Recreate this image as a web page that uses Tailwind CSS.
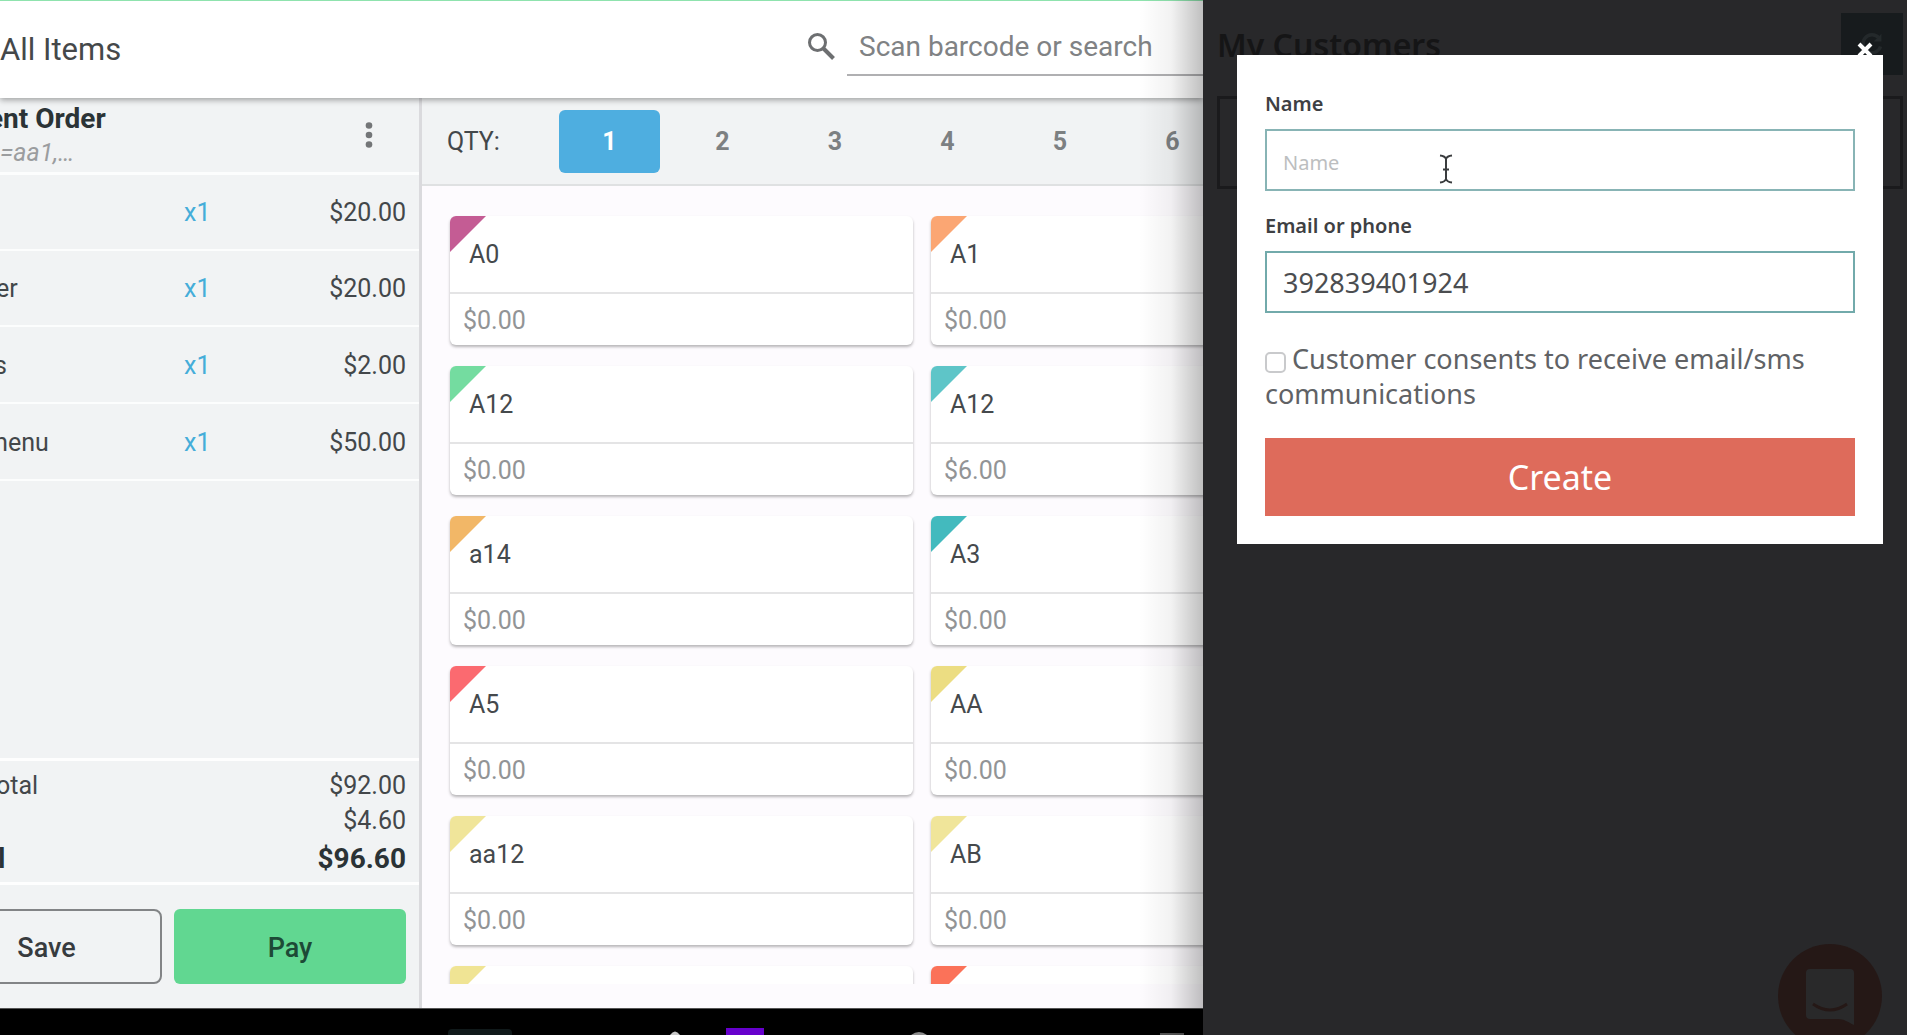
<!DOCTYPE html>
<html lang="en">
<head>
<meta charset="utf-8">
<title>All Items</title>
<script src="https://cdn.jsdelivr.net/npm/@tailwindcss/browser@4"></script>
</head>
<body class="flex h-screen overflow-hidden bg-[#28282a] font-['Roboto',sans-serif] text-[25px] leading-8 text-[#43474a]">

<!-- Register -->
<div class="relative flex min-w-0 flex-1 flex-col overflow-hidden bg-black">
  <header class="relative z-10 flex h-[98px] shrink-0 items-center border-t border-[#8fe3ae] bg-white pb-1 shadow-[0_2px_6px_rgba(0,0,0,0.35)]">
    <h1 class="flex-1 pt-1 text-[31px] text-[#45484a]">All Items</h1>
    <label for="search" class="mr-3 mb-1">
      <svg class="size-7" viewBox="0 0 28 28" fill="none" stroke="#6d6f71" stroke-width="3" aria-label="Search"><circle cx="10.500" cy="10.500" r="8"/><path d="M16.500 16.500L26.500 26.500" stroke-width="4"/></svg>
    </label>
    <input id="search" type="text" placeholder="Scan barcode or search" class="h-14 w-[356px] border-b-2 border-[#b0b0b2] pl-3 text-[28px] outline-none placeholder:text-[#808284]">
  </header>

  <main class="flex min-h-0 flex-1">
    <!-- Current order -->
    <section class="flex w-[422px] shrink-0 flex-col overflow-hidden border-r-3 border-[#dadadd] bg-[#f1f3f4]">
      <div class="flex h-[77px] shrink-0 items-center justify-between border-b-3 border-white/80">
        <div>
          <h2 class="-ml-3 text-[28px] leading-9 font-bold text-[#2b3336]">ent Order</h2>
          <p class="text-[#9b9d9f] italic">=aa1,…</p>
        </div>
        <button class="mr-[42px] p-1" aria-label="Order options">
          <svg class="h-7 w-2" viewBox="0 0 8 28" fill="#737577"><circle cx="4" cy="4.500" r="3.300"/><circle cx="4" cy="14" r="3.300"/><circle cx="4" cy="23.500" r="3.300"/></svg>
        </button>
      </div>
      <table class="h-[306px] w-full table-fixed border-collapse">
        <tbody>
          <tr class="border-b-2 border-white/80"><td class="w-[184px]"></td><td class="w-16 pt-0.5 text-[#45add9]">x1</td><td class="pt-0.5 pr-[13px] text-right">$20.00</td></tr>
          <tr class="border-b-2 border-white/80"><td class="pt-0.5"><span class="-ml-1">er</span></td><td class="pt-0.5 text-[#45add9]">x1</td><td class="pt-0.5 pr-[13px] text-right">$20.00</td></tr>
          <tr class="border-b-2 border-white/80"><td class="pt-0.5"><span class="-ml-1.5">s</span></td><td class="pt-0.5 text-[#45add9]">x1</td><td class="pt-0.5 pr-[13px] text-right">$2.00</td></tr>
          <tr class="border-b-2 border-white/80"><td class="pt-0.5"><span class="-ml-3.5">menu</span></td><td class="pt-0.5 text-[#45add9]">x1</td><td class="pt-0.5 pr-[13px] text-right">$50.00</td></tr>
        </tbody>
      </table>
      <div class="mt-auto border-y-3 border-white/90 pt-2 pr-[13px] pb-1">
        <div class="flex h-[34px] items-center justify-between"><span class="-ml-1">otal</span><span>$92.00</span></div>
        <div class="flex h-9 items-center justify-end"><span>$4.60</span></div>
        <div class="flex h-[39px] items-center justify-between text-[28px] font-bold text-[#2b3336]"><span class="-ml-0.5">l</span><span>$96.60</span></div>
      </div>
      <div class="flex gap-3 pt-6 pr-[13px] pb-6 text-[27px] font-medium">
        <button class="-ml-[69px] h-[75px] w-[231px] shrink-0 rounded-lg border-2 border-[#828486] pt-0.5 text-[#373b3e]">Save</button>
        <button class="h-[75px] flex-1 rounded-md bg-[#61d791] pt-0.5 text-[#1d4a36]">Pay</button>
      </div>
    </section>

    <!-- Items -->
    <section class="flex min-w-0 flex-1 flex-col bg-[#fdfbfe]">
      <div class="flex h-[88px] shrink-0 items-center overflow-hidden border-b-2 border-[#dfe1e2] bg-[#f1f3f4] pl-[25px]">
        <span class="w-28 shrink-0 pt-0.5">QTY:</span>
        <div class="flex gap-3 font-bold text-[#7c8082]">
          <button class="h-[63px] w-[101px] rounded-md bg-[#4eaee0] pt-0.5 text-white">1</button>
          <button class="h-[63px] w-[101px] pt-0.5">2</button>
          <button class="h-[63px] w-[100px] pt-0.5">3</button>
          <button class="h-[63px] w-[101px] pt-0.5">4</button>
          <button class="h-[63px] w-[100px] pt-0.5">5</button>
          <button class="h-[63px] w-[101px] pt-0.5">6</button>
        </div>
      </div>
      <div class="mb-6 min-h-0 flex-1 overflow-hidden pt-[30px] pl-7">
        <div class="grid grid-cols-[463px_463px] gap-x-[18px] gap-y-[21px] text-[#45494c]">
          <article class="relative h-[129px] overflow-hidden rounded-md bg-white shadow-[0_2px_3px_rgba(0,0,0,0.28)]"><span class="absolute top-0 left-0 size-9 bg-[#c45c94] [clip-path:polygon(0_0,100%_0,0_100%)]"></span><h3 class="flex h-[78px] items-center border-b-2 border-[#e4e4e5] pt-0.5 pl-[19px]">A0</h3><p class="flex h-[51px] items-center pt-0.5 pl-[13px] text-[#929496]">$0.00</p></article>
          <article class="relative h-[129px] overflow-hidden rounded-md bg-white shadow-[0_2px_3px_rgba(0,0,0,0.28)]"><span class="absolute top-0 left-0 size-9 bg-[#fba673] [clip-path:polygon(0_0,100%_0,0_100%)]"></span><h3 class="flex h-[78px] items-center border-b-2 border-[#e4e4e5] pt-0.5 pl-[19px]">A1</h3><p class="flex h-[51px] items-center pt-0.5 pl-[13px] text-[#929496]">$0.00</p></article>
          <article class="relative h-[129px] overflow-hidden rounded-md bg-white shadow-[0_2px_3px_rgba(0,0,0,0.28)]"><span class="absolute top-0 left-0 size-9 bg-[#74dca0] [clip-path:polygon(0_0,100%_0,0_100%)]"></span><h3 class="flex h-[78px] items-center border-b-2 border-[#e4e4e5] pt-0.5 pl-[19px]">A12</h3><p class="flex h-[51px] items-center pt-0.5 pl-[13px] text-[#929496]">$0.00</p></article>
          <article class="relative h-[129px] overflow-hidden rounded-md bg-white shadow-[0_2px_3px_rgba(0,0,0,0.28)]"><span class="absolute top-0 left-0 size-9 bg-[#5ec5c8] [clip-path:polygon(0_0,100%_0,0_100%)]"></span><h3 class="flex h-[78px] items-center border-b-2 border-[#e4e4e5] pt-0.5 pl-[19px]">A12</h3><p class="flex h-[51px] items-center pt-0.5 pl-[13px] text-[#929496]">$6.00</p></article>
          <article class="relative h-[129px] overflow-hidden rounded-md bg-white shadow-[0_2px_3px_rgba(0,0,0,0.28)]"><span class="absolute top-0 left-0 size-9 bg-[#f2b767] [clip-path:polygon(0_0,100%_0,0_100%)]"></span><h3 class="flex h-[78px] items-center border-b-2 border-[#e4e4e5] pt-0.5 pl-[19px]">a14</h3><p class="flex h-[51px] items-center pt-0.5 pl-[13px] text-[#929496]">$0.00</p></article>
          <article class="relative h-[129px] overflow-hidden rounded-md bg-white shadow-[0_2px_3px_rgba(0,0,0,0.28)]"><span class="absolute top-0 left-0 size-9 bg-[#43babe] [clip-path:polygon(0_0,100%_0,0_100%)]"></span><h3 class="flex h-[78px] items-center border-b-2 border-[#e4e4e5] pt-0.5 pl-[19px]">A3</h3><p class="flex h-[51px] items-center pt-0.5 pl-[13px] text-[#929496]">$0.00</p></article>
          <article class="relative h-[129px] overflow-hidden rounded-md bg-white shadow-[0_2px_3px_rgba(0,0,0,0.28)]"><span class="absolute top-0 left-0 size-9 bg-[#fb6a70] [clip-path:polygon(0_0,100%_0,0_100%)]"></span><h3 class="flex h-[78px] items-center border-b-2 border-[#e4e4e5] pt-0.5 pl-[19px]">A5</h3><p class="flex h-[51px] items-center pt-0.5 pl-[13px] text-[#929496]">$0.00</p></article>
          <article class="relative h-[129px] overflow-hidden rounded-md bg-white shadow-[0_2px_3px_rgba(0,0,0,0.28)]"><span class="absolute top-0 left-0 size-9 bg-[#ecdd82] [clip-path:polygon(0_0,100%_0,0_100%)]"></span><h3 class="flex h-[78px] items-center border-b-2 border-[#e4e4e5] pt-0.5 pl-[19px]">AA</h3><p class="flex h-[51px] items-center pt-0.5 pl-[13px] text-[#929496]">$0.00</p></article>
          <article class="relative h-[129px] overflow-hidden rounded-md bg-white shadow-[0_2px_3px_rgba(0,0,0,0.28)]"><span class="absolute top-0 left-0 size-9 bg-[#f0e59a] [clip-path:polygon(0_0,100%_0,0_100%)]"></span><h3 class="flex h-[78px] items-center border-b-2 border-[#e4e4e5] pt-0.5 pl-[19px]">aa12</h3><p class="flex h-[51px] items-center pt-0.5 pl-[13px] text-[#929496]">$0.00</p></article>
          <article class="relative h-[129px] overflow-hidden rounded-md bg-white shadow-[0_2px_3px_rgba(0,0,0,0.28)]"><span class="absolute top-0 left-0 size-9 bg-[#f0e59a] [clip-path:polygon(0_0,100%_0,0_100%)]"></span><h3 class="flex h-[78px] items-center border-b-2 border-[#e4e4e5] pt-0.5 pl-[19px]">AB</h3><p class="flex h-[51px] items-center pt-0.5 pl-[13px] text-[#929496]">$0.00</p></article>
          <article class="relative h-[129px] overflow-hidden rounded-md bg-white shadow-[0_2px_3px_rgba(0,0,0,0.28)]"><span class="absolute top-0 left-0 size-9 bg-[#f0e494] [clip-path:polygon(0_0,100%_0,0_100%)]"></span></article>
          <article class="relative h-[129px] overflow-hidden rounded-md bg-white shadow-[0_2px_3px_rgba(0,0,0,0.28)]"><span class="absolute top-0 left-0 size-9 bg-[#fb7259] [clip-path:polygon(0_0,100%_0,0_100%)]"></span></article>
        </div>
      </div>
    </section>
  </main>

  <!-- System navigation -->
  <footer class="flex h-[27px] shrink-0 items-end overflow-hidden border-t border-[#555] bg-black pl-[448px]">
    <span class="h-1.5 w-16 rounded-t bg-[#10191a]"></span>
    <svg class="ml-[158px] h-1 w-2.5" viewBox="0 0 10 4" fill="#c8c8c8"><path d="M0 4Q5-3 10 4z"/></svg>
    <span class="ml-[46px] h-[7px] w-[38px] bg-[#6600cc]"></span>
    <svg class="ml-[147px] h-1 w-4" viewBox="0 0 16 4" fill="#8c8c8c"><path d="M0 4Q8-2 16 4z"/></svg>
    <span class="ml-[233px] h-0.5 w-6 bg-[#555]"></span>
  </footer>
  <div class="pointer-events-none absolute inset-y-0 right-0 z-20 w-16 bg-linear-to-r from-black/0 via-black/5 to-black/25"></div>
</div>

<!-- Customers drawer -->
<aside class="relative w-[704px] shrink-0 overflow-hidden bg-[#28282a] font-['Noto_Sans',sans-serif] text-[#4b4d50]">
  <div class="flex items-start justify-between pt-[13px] pr-1 pl-[14px]">
    <h2 class="pt-2 text-[32px] leading-[48px] font-semibold text-[#151516]">My Customers</h2>
    <button class="flex h-[62px] w-[62px] items-center justify-center bg-[#171b1d]" aria-label="Refresh">
      <svg class="size-6" viewBox="0 0 28 28" fill="none" stroke="#24292b" stroke-width="4"><path d="M24 17A10.500 10.500 0 1 1 22 7"/><path d="M25 2v9h-9z" fill="#24292b" stroke="none"/></svg>
    </button>
  </div>
  <div class="mt-[21px] mr-1 ml-[14px] h-[93px] border-3 border-[#1a1a1c]"></div>

  <button class="absolute right-[25px] bottom-0 flex h-[91px] w-[104px] justify-center overflow-hidden" aria-label="Open chat">
    <svg class="h-[104px] w-[104px] shrink-0" viewBox="0 0 104 104"><circle cx="52" cy="52" r="52" fill="#251816"/><path d="M32 25H72a4 4 0 0 1 4 4V81C70 78 66 75 60 75H32a4 4 0 0 1-4-4V29a4 4 0 0 1 4-4z" fill="#29292a"/><path d="M35 60Q52 72 69 60" fill="none" stroke="#251816" stroke-width="3"/></svg>
  </button>

  <!-- New customer dialog -->
  <form class="absolute top-[55px] right-6 left-[34px] bg-white px-7 pt-[33px] pb-7" role="dialog" aria-label="New customer">
    <button type="button" class="absolute -top-[13px] right-2.5" aria-label="Close">
      <svg class="size-4" viewBox="0 0 16 16" stroke="#fff" stroke-width="4"><path d="M2 2L14 14M14 2L2 14"/></svg>
    </button>
    <label for="name" class="block text-[20px] font-semibold text-[#3e4043]">Name</label>
    <input id="name" type="text" placeholder="Name" class="mt-[9px] block h-[62px] w-full border-2 border-[#88b4b5] px-4 pt-1 text-[20px] text-[#4b4d50] outline-none placeholder:text-[#bcbec0]">
    <label for="contact" class="mt-[19px] block text-[20px] font-semibold text-[#3e4043]">Email or phone</label>
    <input id="contact" type="text" value="392839401924" class="mt-[9px] block h-[62px] w-full border-2 border-[#72aaab] px-4 text-[27px] text-[#4b4d50] outline-none">
    <div class="mt-7 text-[27px] leading-[35px] text-[#606265]">
      <input id="consent" type="checkbox" class="mr-1.5 size-[21px] appearance-none rounded-[5px] border-2 border-[#c9cacc] bg-white align-[-4px]"><label for="consent">Customer consents to receive email/sms communications</label>
    </div>
    <button type="submit" class="mt-[27px] block h-[78px] w-full bg-[#de6b5b] text-[34px] text-white">Create</button>
  </form>

  <!-- Text pointer -->
  <svg class="pointer-events-none absolute top-[154px] left-[236px] h-[30px] w-3.5" viewBox="0 0 14 30" fill="none" stroke="#3a3c3e" stroke-width="2"><path d="M1 1.500Q6 2 7 5Q8 2 13 1.500M7 5V25M1 28.500Q6 28 7 25Q8 28 13 28.500M4 15.500H10"/></svg>
</aside>
</body>
</html>
